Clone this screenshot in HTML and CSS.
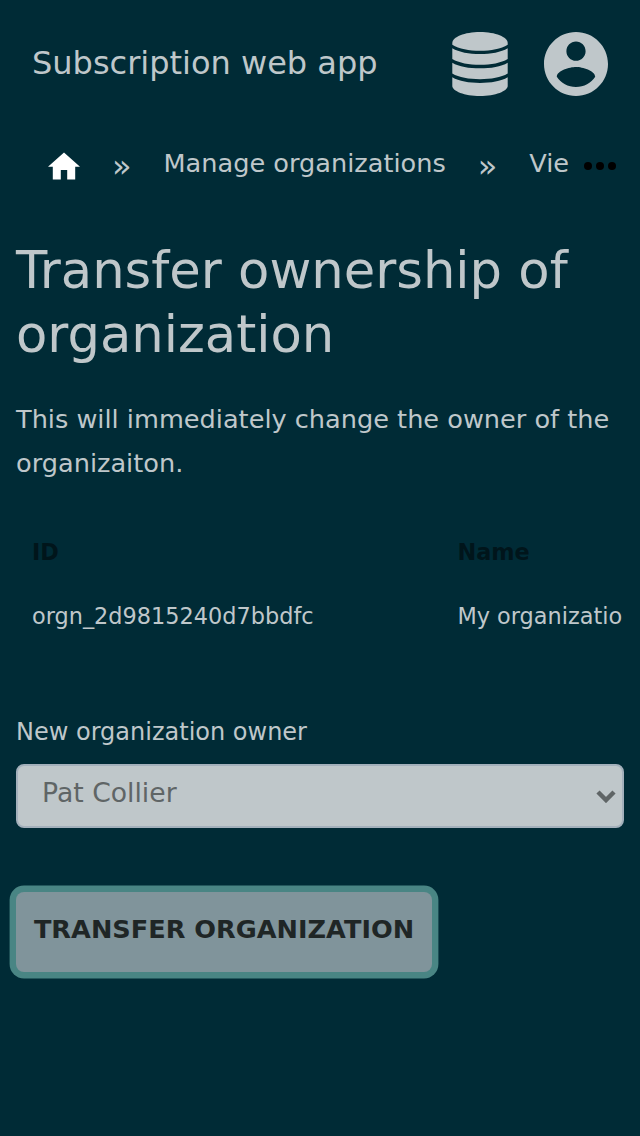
FILE: index.html
```html
<!DOCTYPE html>
<html lang="en"><head><meta charset="utf-8"><title>Subscription web app</title><link rel="stylesheet" href="styles.css"></head>
<body>
<header class="header">
<a class="brand">Subscription web app</a>
<svg class="icon database" viewBox="0 0 56 64"><path d="M.3 11C.3 5 12.500 0 28 0s27.700 5 27.700 11v1.700C49 16.700 39 18.700 28 18.700S7 16.700 .3 12.700z"/><path d="M.3 16.300C7 20.300 17 22.100 28 22.100s21-1.800 27.700-5.800V27C49 31 39 32.800 28 32.800S7 31 .3 27z"/><path d="M.3 30.700C7 34.700 17 36.300 28 36.300s21-1.600 27.700-5.600v10.900C49 45.600 39 47.300 28 47.300S7 45.600 .3 41.600z"/><path d="M.3 45.200C7 49.200 17 50.900 28 50.900s21-1.700 27.700-5.700V54c0 5-12.200 10-27.700 10S.3 59 .3 54z"/></svg>
<svg class="icon account" viewBox="2 2 20 20"><path d="M12 2C6.480 2 2 6.480 2 12s4.480 10 10 10 10-4.480 10-10S17.520 2 12 2zm0 3c1.660 0 3 1.340 3 3s-1.340 3-3 3-3-1.340-3-3 1.340-3 3-3zm0 14.200c-2.500 0-4.710-1.280-6-3.220.03-1.990 4-3.080 6-3.080 1.990 0 5.970 1.090 6 3.080-1.290 1.940-3.500 3.220-6 3.220z"/></svg>
</header>
<nav class="crumbs">
<svg class="home" viewBox="2 3 20 17"><path d="M10 20v-6h4v6h5v-8h3L12 3 2 12h3v8z"/></svg>
<span class="sep">»</span><a class="manage">Manage organizations</a><span class="sep">»</span><a class="view">Vie</a>
<svg class="more" viewBox="0 0 32 8"><circle cx="4" cy="4" r="4"/><circle cx="16" cy="4" r="4"/><circle cx="28" cy="4" r="4"/></svg>
</nav>
<main class="main">
<h1 class="title">Transfer ownership of organization</h1>
<p class="description">This will immediately change the owner of the organizaiton.</p>
<div class="table"><div class="row head"><span class="id">ID</span><span>Name</span></div><div class="row"><span class="id">orgn_2d9815240d7bbdfc</span><span>My organizatio</span></div></div>
<form class="form"><label class="label">New organization owner</label>
<div class="select"><span>Pat Collier</span><svg class="chevron" viewBox="0 0 20 14"><path d="M2 3l8 8 8-8"/></svg></div>
<button class="button" type="button">TRANSFER ORGANIZATION</button></form>
</main></body></html>
```
FILE: styles.css
```css
*{box-sizing:border-box}
body{margin:0;width:640px;height:1136px;overflow:hidden;background:#002b36;color:#bfc7ca;font-family:"DejaVu Sans",sans-serif}
.header{height:128px;padding:32px;display:flex;align-items:flex-start}
.brand{font-size:32px;line-height:62px;flex:1;white-space:nowrap}
.icon{fill:#bfc7ca}
.database{width:56px;height:64px;margin-right:36px}
.account{width:64px;height:64px}
.crumbs{height:72px;padding-left:48px;display:flex;align-items:center;white-space:nowrap}
.home{width:32px;height:28px;fill:#fff;margin-top:4px;flex:none}
.sep{font-size:32px;line-height:68px;padding-top:4px;width:83.500px;text-align:center;flex:none}
.manage{font-size:25.600px;line-height:70px;height:72px}
.view{font-size:25.600px;width:40px;height:72px;line-height:70px}
.more{width:32px;height:8px;margin:4px 0 0 15px}
.main{padding:38px 16px 0}
.title{font-size:51.200px;font-weight:400;line-height:64px;margin:0}
.description{font-size:25.600px;line-height:44px;margin:31px 0 0}
.table{margin:35px 0 0;overflow:hidden;font-size:22.400px}
.row{display:flex;height:64px;line-height:64px;padding-left:16px;white-space:nowrap}
.id{width:425.400px;flex:none}
.head{font-weight:700;color:#00151b}
.form{margin-top:64px}
.label{display:block;font-size:24px;line-height:40px}
.select{height:64px;margin-top:12px;border:2px solid #a3b0bb;border-radius:8px;background:#bfc7ca;color:#5f6566;padding:0 6px 0 24px;display:flex;align-items:center;justify-content:space-between;font-size:26.660px}
.select span{padding-bottom:8px}
.chevron{width:20px;height:14px;fill:none;stroke:#5f6566;stroke-width:4.500}
.button{display:block;width:416px;height:80px;margin-top:64px;border:0;border-radius:8px;box-shadow:0 0 0 6.400px #498584;background:#80949b;color:#1f2626;font:700 25.600px "DejaVu Sans",sans-serif;padding:0 0 6px;white-space:nowrap}
```
